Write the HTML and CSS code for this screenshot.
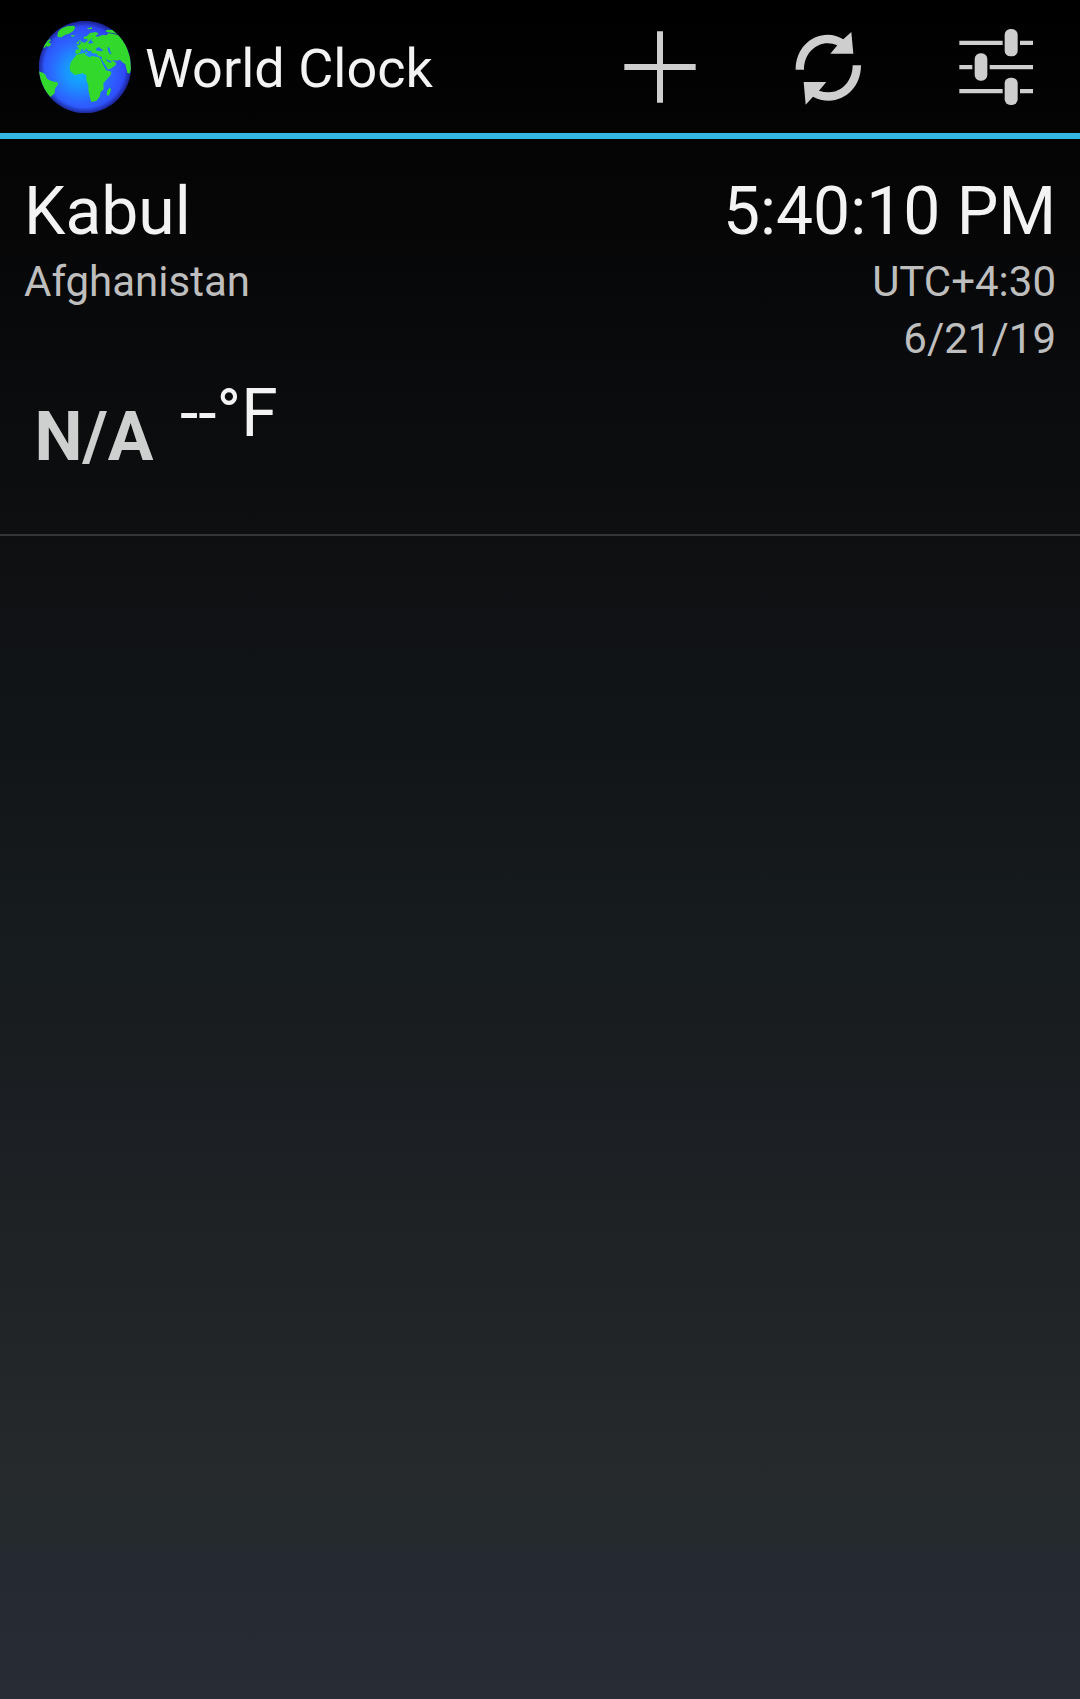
FILE: index.html
```html
<!DOCTYPE html>
<html lang="en">
<head>
<meta charset="utf-8">
<meta name="viewport" content="width=device-width, initial-scale=1">
<title>World Clock</title>
<link rel="stylesheet" href="styles.css">
</head>
<body>
<header class="action-bar">
  <svg class="globe" viewBox="21 27 288 288" aria-hidden="true">
    <defs>
      <radialGradient id="ocean" gradientUnits="userSpaceOnUse" cx="150" cy="185" r="150">
        <stop offset="0" stop-color="#0cb2ff"/>
        <stop offset="0.3" stop-color="#1a94ff"/>
        <stop offset="0.6" stop-color="#2b66ff"/>
        <stop offset="0.85" stop-color="#2f4dfa"/>
        <stop offset="1" stop-color="#2a3de0"/>
      </radialGradient>
      <radialGradient id="rim" gradientUnits="userSpaceOnUse" cx="165" cy="171" r="138">
        <stop offset="0.88" stop-color="#101060" stop-opacity="0"/>
        <stop offset="1" stop-color="#101060" stop-opacity="0.6"/>
      </radialGradient>
      <clipPath id="disc"><circle cx="165" cy="171" r="138"/></clipPath>
    </defs>
    <circle cx="165" cy="171" r="138" fill="url(#ocean)"/>
    <circle cx="165" cy="171" r="138" fill="url(#rim)"/>
    <g clip-path="url(#disc)" fill="#33d82d">
      <path d="M82 79 L84 66 L93 56 L110 49 L132 47 L136 53 L129 64 L117 71 L106 74 L94 82 L87 82Z"/>
      <path d="M122 76 L132 75 L134 79 L126 80Z M171 55 L186 52 L186 57 L174 58Z"/>
      <path d="M50 95 L60 86 L62 92 L55 98 L63 100 L62 106 L55 110 L47 108 L45 114 L38 112Z"/>
      <path d="M27 184 L38 188 L45 193 L52 207 L66 214 L83 217 L84 223 L75 236 L74 249 L62 261 L50 250 L38 230 L27 200Z"/>
      <path d="M140 107 L149 104 L153 97 L147 93 L149 89 L156 97 L165 98 L174 91 L170 86 L162 87 L161 81 L172 77 L180 69 L198 66 L207 72 L197 76 L201 81 L218 75 L230 76 L235 70 L248 71 L266 76 L285 94 L301 145 L303 180 L298 191 L292 188 L286 163 L277 157 L270 149 L260 152 L245 150 L258 158 L257 166 L242 176 L233 178 L224 164 L215 151 L216 140 L203 138 L202 132 L184 128 L185 122 L175 123 L168 115 L162 124 L158 116 L153 119 L150 129 L140 132 L136 128 L137 119 L148 118Z"/>
      <path d="M142 96 L148 94 L146 102 L139 102Z M226 64 L232 59 L246 60 L249 56 L260 64 L270 75 L250 69 L233 67Z"/>
      <path d="M139 134 L152 131 L164 129 L169 137 L180 142 L185 138 L207 142 L213 149 L220 164 L228 181 L244 185 L242 195 L226 213 L220 220 L221 238 L211 247 L210 258 L200 272 L185 276 L181 268 L175 239 L175 226 L169 211 L169 196 L158 190 L135 195 L122 185 L119 174 L122 157 L133 143Z"/>
      <path d="M239 233 L243 237 L240 250 L235 258 L230 254 L231 243Z M165 125 L173 127 L168 131Z"/>
    </g>
    <g fill="#2372ff">
      <path d="M174 97 L180 91 L185 84 L184 92 L191 97 L186 100 L177 101Z"/>
      <path d="M197 116 L206 111 L214 116 L221 121 L211 124 L200 122Z"/>
      <path d="M233 110 L240 114 L240 122 L245 130 L240 133 L234 123Z"/>
      <path d="M213 148 L218 153 L229 170 L234 180 L229 180 L218 162Z M227 147 L236 151 L246 155 L242 158 L233 155Z"/>
    </g>
  </svg>
  <h1 class="title">World Clock</h1>
  <nav class="actions" aria-label="Actions">
    <button class="action" type="button" aria-label="Add">
      <svg class="icon" viewBox="36 27 288 288"><path d="M171 64h18v98h98v18h-98v98h-18v-98H73v-18h98z"/></svg>
    </button>
    <button class="action" type="button" aria-label="Refresh">
      <svg class="icon" viewBox="0 27 288 288">
        <path d="M47 179C47 116 92 74 143 74Q169 74 190 88L214 66L220 131H151L172 106Q158 100 143 100C106 100 72 132 72 179Z"/>
        <path d="M243 166C243 229 198 272 147 272Q120 272 99 260L77 284L71 216H139L117 242Q131 247 147 247C184 247 218 214 218 166Z"/>
      </svg>
    </button>
    <button class="action" type="button" aria-label="Settings">
      <svg class="icon" viewBox="24 27 288 288">
        <path d="M58 92h130v13H58zM240 92h39v13h-39zM58 165h39v13H58zM149 165h130v13H149zM58 237h130v13H58zM240 237h39v13h-39z"/>
        <rect x="194" y="57" width="39" height="82" rx="17"/>
        <rect x="104" y="130" width="38" height="82" rx="17"/>
        <rect x="194" y="203" width="39" height="82" rx="17"/>
      </svg>
    </button>
  </nav>
</header>
<main>
  <ul class="clocks">
    <li class="clock">
      <div class="row primary"><h2 class="city">Kabul</h2><time>5:40:10 PM</time></div>
      <div class="row secondary"><span>Afghanistan</span><span>UTC+4:30</span></div>
      <div class="date secondary">6/21/19</div>
      <div class="weather">
        <span class="condition">N/A</span>
        <span class="primary">--°F</span>
      </div>
    </li>
  </ul>
</main>
</body>
</html>
```
FILE: styles.css
```css
* { box-sizing: border-box; }

html { min-height: 100%; background: #000; }

body {
  margin: 0;
  min-height: 100vh;
  color: #f3f3f3;
  font-family: Roboto, "Noto Sans", sans-serif;
  background: linear-gradient(#000 0%, #0e0f11 31%, #111417 41%, #161b1d 55%, #1c1f23 67%, #202426 76%, #25292b 86%, #252a2c 90.5%, #252931 91.5%, #282c34 100%);
}

h1, h2 { margin: 0; font: inherit; }

.action-bar {
  display: flex;
  align-items: center;
  height: 139px;
  padding-left: 37px;
  border-bottom: 6px solid #33b5e5;
}

.globe { width: 96px; height: 96px; flex: none; }

.title {
  flex: 1;
  padding: 4px 0 0 12px;
  font-size: 54px;
  line-height: 64px;
  white-space: nowrap;
}

.actions { display: flex; }

.action {
  display: flex;
  align-items: center;
  justify-content: center;
  width: 168px;
  height: 133px;
  padding: 0;
  border: 0;
  background: none;
  color: #cecece;
}

.icon { width: 96px; height: 96px; fill: currentColor; }

.clocks { margin: 0; padding: 0; list-style: none; }

.clock {
  padding: 31px 24px 32px;
  border-bottom: 2px solid #343537;
}

.row { display: flex; justify-content: space-between; }

.primary { font-size: 66px; line-height: 83px; }

.secondary { font-size: 42px; line-height: 57px; color: #bebebe; }

.date { text-align: right; }

.weather { display: flex; gap: 16px; padding-top: 5px; }

.condition {
  width: 140px;
  color: #cecfcf;
  font-size: 68px;
  font-weight: 700;
  line-height: 130px;
  text-align: center;
}
```
